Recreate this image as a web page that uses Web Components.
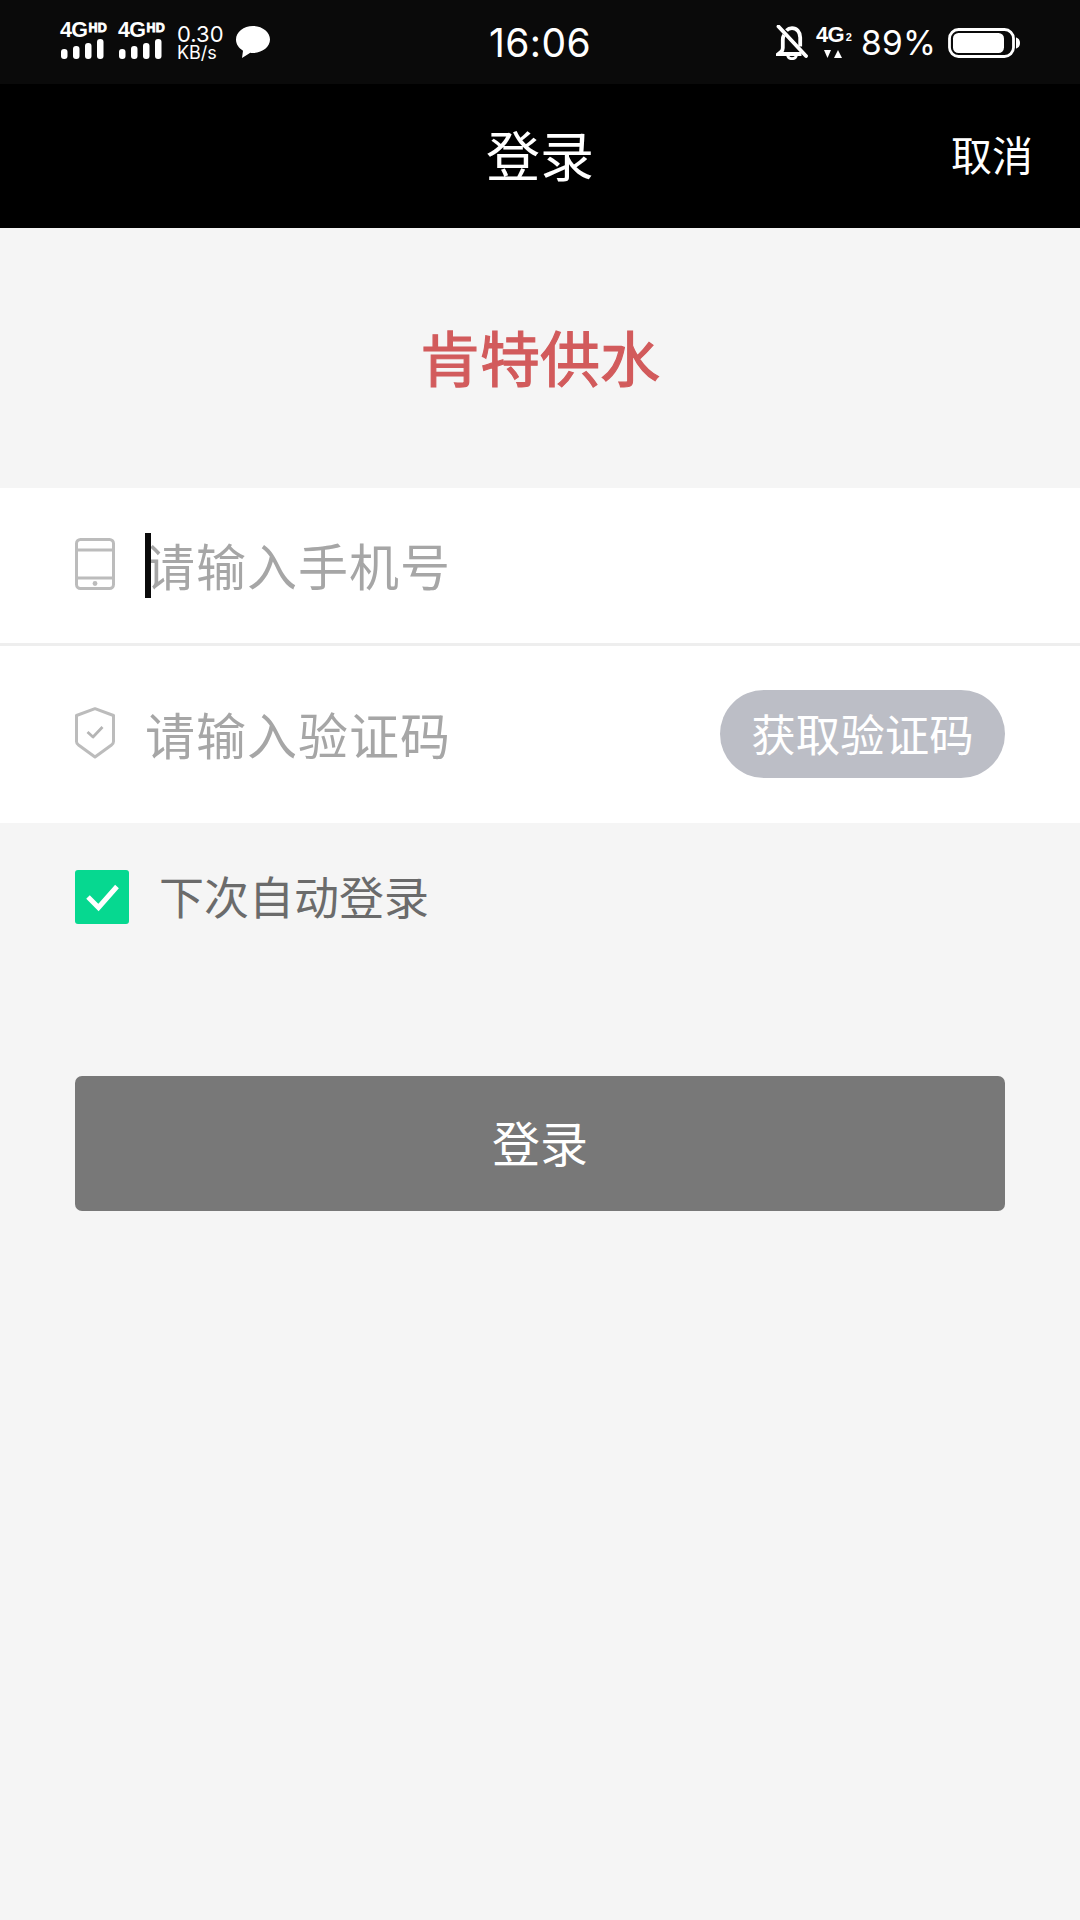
<!DOCTYPE html>
<html lang="zh">
<head>
<meta charset="utf-8">
<title>登录</title>
<style>
  html, body { margin: 0; padding: 0; background: #f5f5f5; }
  body { width: 1080px; height: 1920px; overflow: hidden; font-family: "Noto Sans CJK SC", "Noto Sans", sans-serif; }
</style>
</head>
<body>
<status-bar></status-bar>
<nav-bar cancel="取消">登录</nav-bar>
<brand-title>肯特供水</brand-title>
<login-field icon="tablet" placeholder="请输入手机号" caret divider></login-field>
<login-field icon="shield" placeholder="请输入验证码" action="获取验证码"></login-field>
<auto-login>下次自动登录</auto-login>
<submit-button>登录</submit-button>

<script>
// little helper, every element below has the same shape
function shadow(el, html) {
  el.attachShadow({ mode: "open" }).innerHTML = html;
}

class StatusBar extends HTMLElement {
  connectedCallback() {
    const signal = `
      <div class="sig">
        <div class="net"><span class="g">4G</span><span class="hd">HD</span></div>
        <svg width="44" height="21" viewBox="0 0 44 21" fill="#fff">
          <rect x="1" y="11" width="6.500" height="10" rx="3"/>
          <rect x="13" y="8" width="6.500" height="13" rx="3"/>
          <rect x="25" y="5" width="6.500" height="16" rx="3"/>
          <rect x="37" y="1" width="6.500" height="20" rx="3"/>
        </svg>
      </div>`;
    shadow(this, `
      <style>
        :host { display: grid; grid-template-columns: 1fr auto 1fr; align-items: center; height: 84px; background: #0a0a0a; color: #fff; font-family: Inter, "Liberation Sans", sans-serif; }
        .left { display: flex; align-items: center; padding-left: 60px; }
        .right { display: flex; align-items: center; justify-content: flex-end; padding-right: 60px; }
        .time { font-size: 39px; letter-spacing: 0.4px; line-height: 84px; padding-top: 1px; }
        .sig { width: 58px; margin-top: -4px; display: flex; flex-direction: column; }
        .net { display: flex; align-items: flex-start; height: 15px; font-family: "Liberation Sans", sans-serif; font-weight: bold; white-space: nowrap; }
        .g { font-size: 21.500px; line-height: 15px; letter-spacing: -0.6px; }
        .hd { font-size: 12.500px; line-height: 10px; letter-spacing: 0.2px; margin-left: 1px; -webkit-text-stroke: 0.8px #fff; }
        .speed { margin-left: 1px; width: 59px; font-size: 22px; line-height: 19px; }
        .speed small { display: block; font-size: 18px; line-height: 17px; }
        .bubble { display: block; margin-top: -1px; }
        .bell { margin-right: 8px; }
        .net2 { width: 36px; margin: -2px 9px 0 0; }
        .net2 b { display: flex; align-items: flex-end; font: bold 22px/17px "Liberation Sans", sans-serif; letter-spacing: -0.8px; white-space: nowrap; }
        .net2 i { font: bold 11px/11px "Liberation Sans", sans-serif; margin-left: 2px; }
        .net2 svg { display: block; margin: 7px 0 0 8px; }
        .pct { font-size: 33.500px; margin-right: 12px; letter-spacing: 0.2px; }
      </style>
      <div class="left">
        ${signal}${signal}
        <div class="speed">0.30<small>KB/s</small></div>
        <svg class="bubble" width="34" height="33" viewBox="0 0 34 33" fill="#fff">
          <path d="M17 0C7.600 0 0 6 0 13.600c0 4.600 2.700 8.600 7 11.100l-1 7.300 8.300-5.300c.9.100 1.800.200 2.700.200 9.400 0 17-6 17-13.300S26.400 0 17 0z"/>
        </svg>
      </div>
      <div class="time">16:06</div>
      <div class="right">
        <svg class="bell" width="32" height="35" viewBox="0 0 32 35" fill="none" stroke="#fff" stroke-width="3.800">
          <path d="M8 10c-.8 1.300-1.200 3-1.200 5v8c0 1.500-.6 2.800-1.600 3.800L2.500 29h23"/>
          <path d="M10.500 5.500c1.400-1.500 3.400-2.300 5.500-2.300 4.700 0 8.200 3.800 8.200 9.300v9"/>
          <path d="M2.500 1.500 30 31" stroke-linecap="round"/>
          <path d="M11.500 30c.4 2.500 2.200 3.700 4.500 3.700s4.100-1.200 4.500-3.700" stroke-width="2.800"/>
        </svg>
        <div class="net2">
          <b>4G<i>2</i></b>
          <svg width="18" height="8" viewBox="0 0 18 8" fill="#fff"><path d="M0 0h7L3.500 8zM10 8h8L14 0z"/></svg>
        </div>
        <div class="pct">89%</div>
        <svg width="72" height="30" viewBox="0 0 72 30">
          <rect x="1.500" y="1.500" width="64" height="27" rx="9" fill="none" stroke="#fff" stroke-width="2.800"/>
          <rect x="5" y="5" width="51" height="20" rx="5.500" fill="#fff"/>
          <path d="M68 9.500c2.500.5 4 2.500 4 5.500s-1.500 5-4 5.500z" fill="#fff"/>
        </svg>
      </div>
    `);
  }
}

class NavBar extends HTMLElement {
  connectedCallback() {
    const cancel = this.getAttribute("cancel") || "";
    shadow(this, `
      <style>
        :host { display: grid; grid-template-columns: 1fr auto 1fr; align-items: center; box-sizing: border-box; height: 144px; padding-bottom: 5px; background: #000; color: #fff; }
        .title { font-size: 54px; line-height: 1; grid-column: 2; }
        .cancel { grid-column: 3; justify-self: end; padding-right: 47px; font-size: 41px; line-height: 1; }
      </style>
      <div class="title"><slot></slot></div>
      <div class="cancel">${cancel}</div>
    `);
  }
}

class BrandTitle extends HTMLElement {
  connectedCallback() {
    shadow(this, `
      <style>
        :host { display: flex; align-items: center; justify-content: center; box-sizing: border-box; height: 260px; padding-bottom: 5px; color: #d25b5c; font-size: 60px; -webkit-text-stroke: 1.200px #d25b5c; }
      </style>
      <slot></slot>
    `);
  }
}

class LoginField extends HTMLElement {
  connectedCallback() {
    const icons = {
      tablet: `<svg width="40" height="52" viewBox="0 0 40 52" fill="none" stroke="#bcbcbc" stroke-width="3">
          <rect x="1.500" y="1.500" width="37" height="49" rx="4"/>
          <path d="M1.500 12h37M1.500 40h37"/>
          <circle cx="20" cy="45.500" r="2.400" fill="#bcbcbc" stroke="none"/>
        </svg>`,
      shield: `<svg width="40" height="52" viewBox="0 0 40 52" fill="none" stroke="#bcbcbc" stroke-width="3" stroke-linejoin="round">
          <path d="M20 1.700 38.500 8.500V34.500c0 1.500-.7 2.700-2 3.500L20 50 3.500 38C2.200 37.200 1.500 36 1.500 34.500V8.500z"/>
          <path d="M12.500 25 18 30 27.500 20" stroke-width="2.800" stroke="#b5b5b5"/>
        </svg>`
    };
    const divider = this.hasAttribute("divider");
    const action = this.getAttribute("action");
    shadow(this, `
      <style>
        :host { display: flex; align-items: center; box-sizing: border-box; height: ${divider ? 158 : 177}px; background: #fff; padding: 0 75px; ${divider ? "border-bottom: 3px solid #eeeeee;" : ""} }
        .ico { width: 40px; height: 52px; flex: none; margin: -3px 32px 0 0; }
        .ico svg { display: block; }
        .text { position: relative; flex: 1; font-size: 50px; line-height: 1; margin: -4px 0 0 -2px; color: #a6a6a6; white-space: nowrap; letter-spacing: 1px; }
        .caret { position: absolute; left: 0; top: -6px; width: 6px; height: 65px; background: #0a0a0a; }
        .btn { flex: none; width: 285px; height: 88px; margin-top: -1px; border-radius: 44px; background: #bcbec6; color: #fff; font-size: 44.500px; line-height: 86px; text-align: center; }
      </style>
      <div class="ico">${icons[this.getAttribute("icon")]}</div>
      <div class="text">${this.hasAttribute("caret") ? '<div class="caret"></div>' : ""}${this.getAttribute("placeholder")}</div>
      ${action ? `<div class="btn">${action}</div>` : ""}
    `);
  }
}

class AutoLogin extends HTMLElement {
  connectedCallback() {
    shadow(this, `
      <style>
        :host { display: flex; align-items: center; height: 150px; padding-left: 75px; color: #6b6b6b; font-size: 45px; }
        .box { width: 54px; height: 54px; margin: -2px 30px 0 0; border-radius: 3px; background: #06d890; flex: none; }
        .box svg { display: block; }
        .label { margin-top: -6px; }
      </style>
      <div class="box">
        <svg width="54" height="54" viewBox="0 0 54 54" fill="none" stroke="#fff" stroke-width="5"><path d="M13 27 23.500 37.500 42 16.500"/></svg>
      </div>
      <div class="label"><slot></slot></div>
    `);
  }
}

class SubmitButton extends HTMLElement {
  connectedCallback() {
    shadow(this, `
      <style>
        :host { display: flex; align-items: center; justify-content: center; box-sizing: border-box; height: 135px; margin: 103px 75px 0; padding-bottom: 5px; border-radius: 7px; background: #787878; color: #fff; font-size: 48px; }
      </style>
      <slot></slot>
    `);
  }
}

customElements.define("status-bar", StatusBar);
customElements.define("nav-bar", NavBar);
customElements.define("brand-title", BrandTitle);
customElements.define("login-field", LoginField);
customElements.define("auto-login", AutoLogin);
customElements.define("submit-button", SubmitButton);
</script>
</body>
</html>
